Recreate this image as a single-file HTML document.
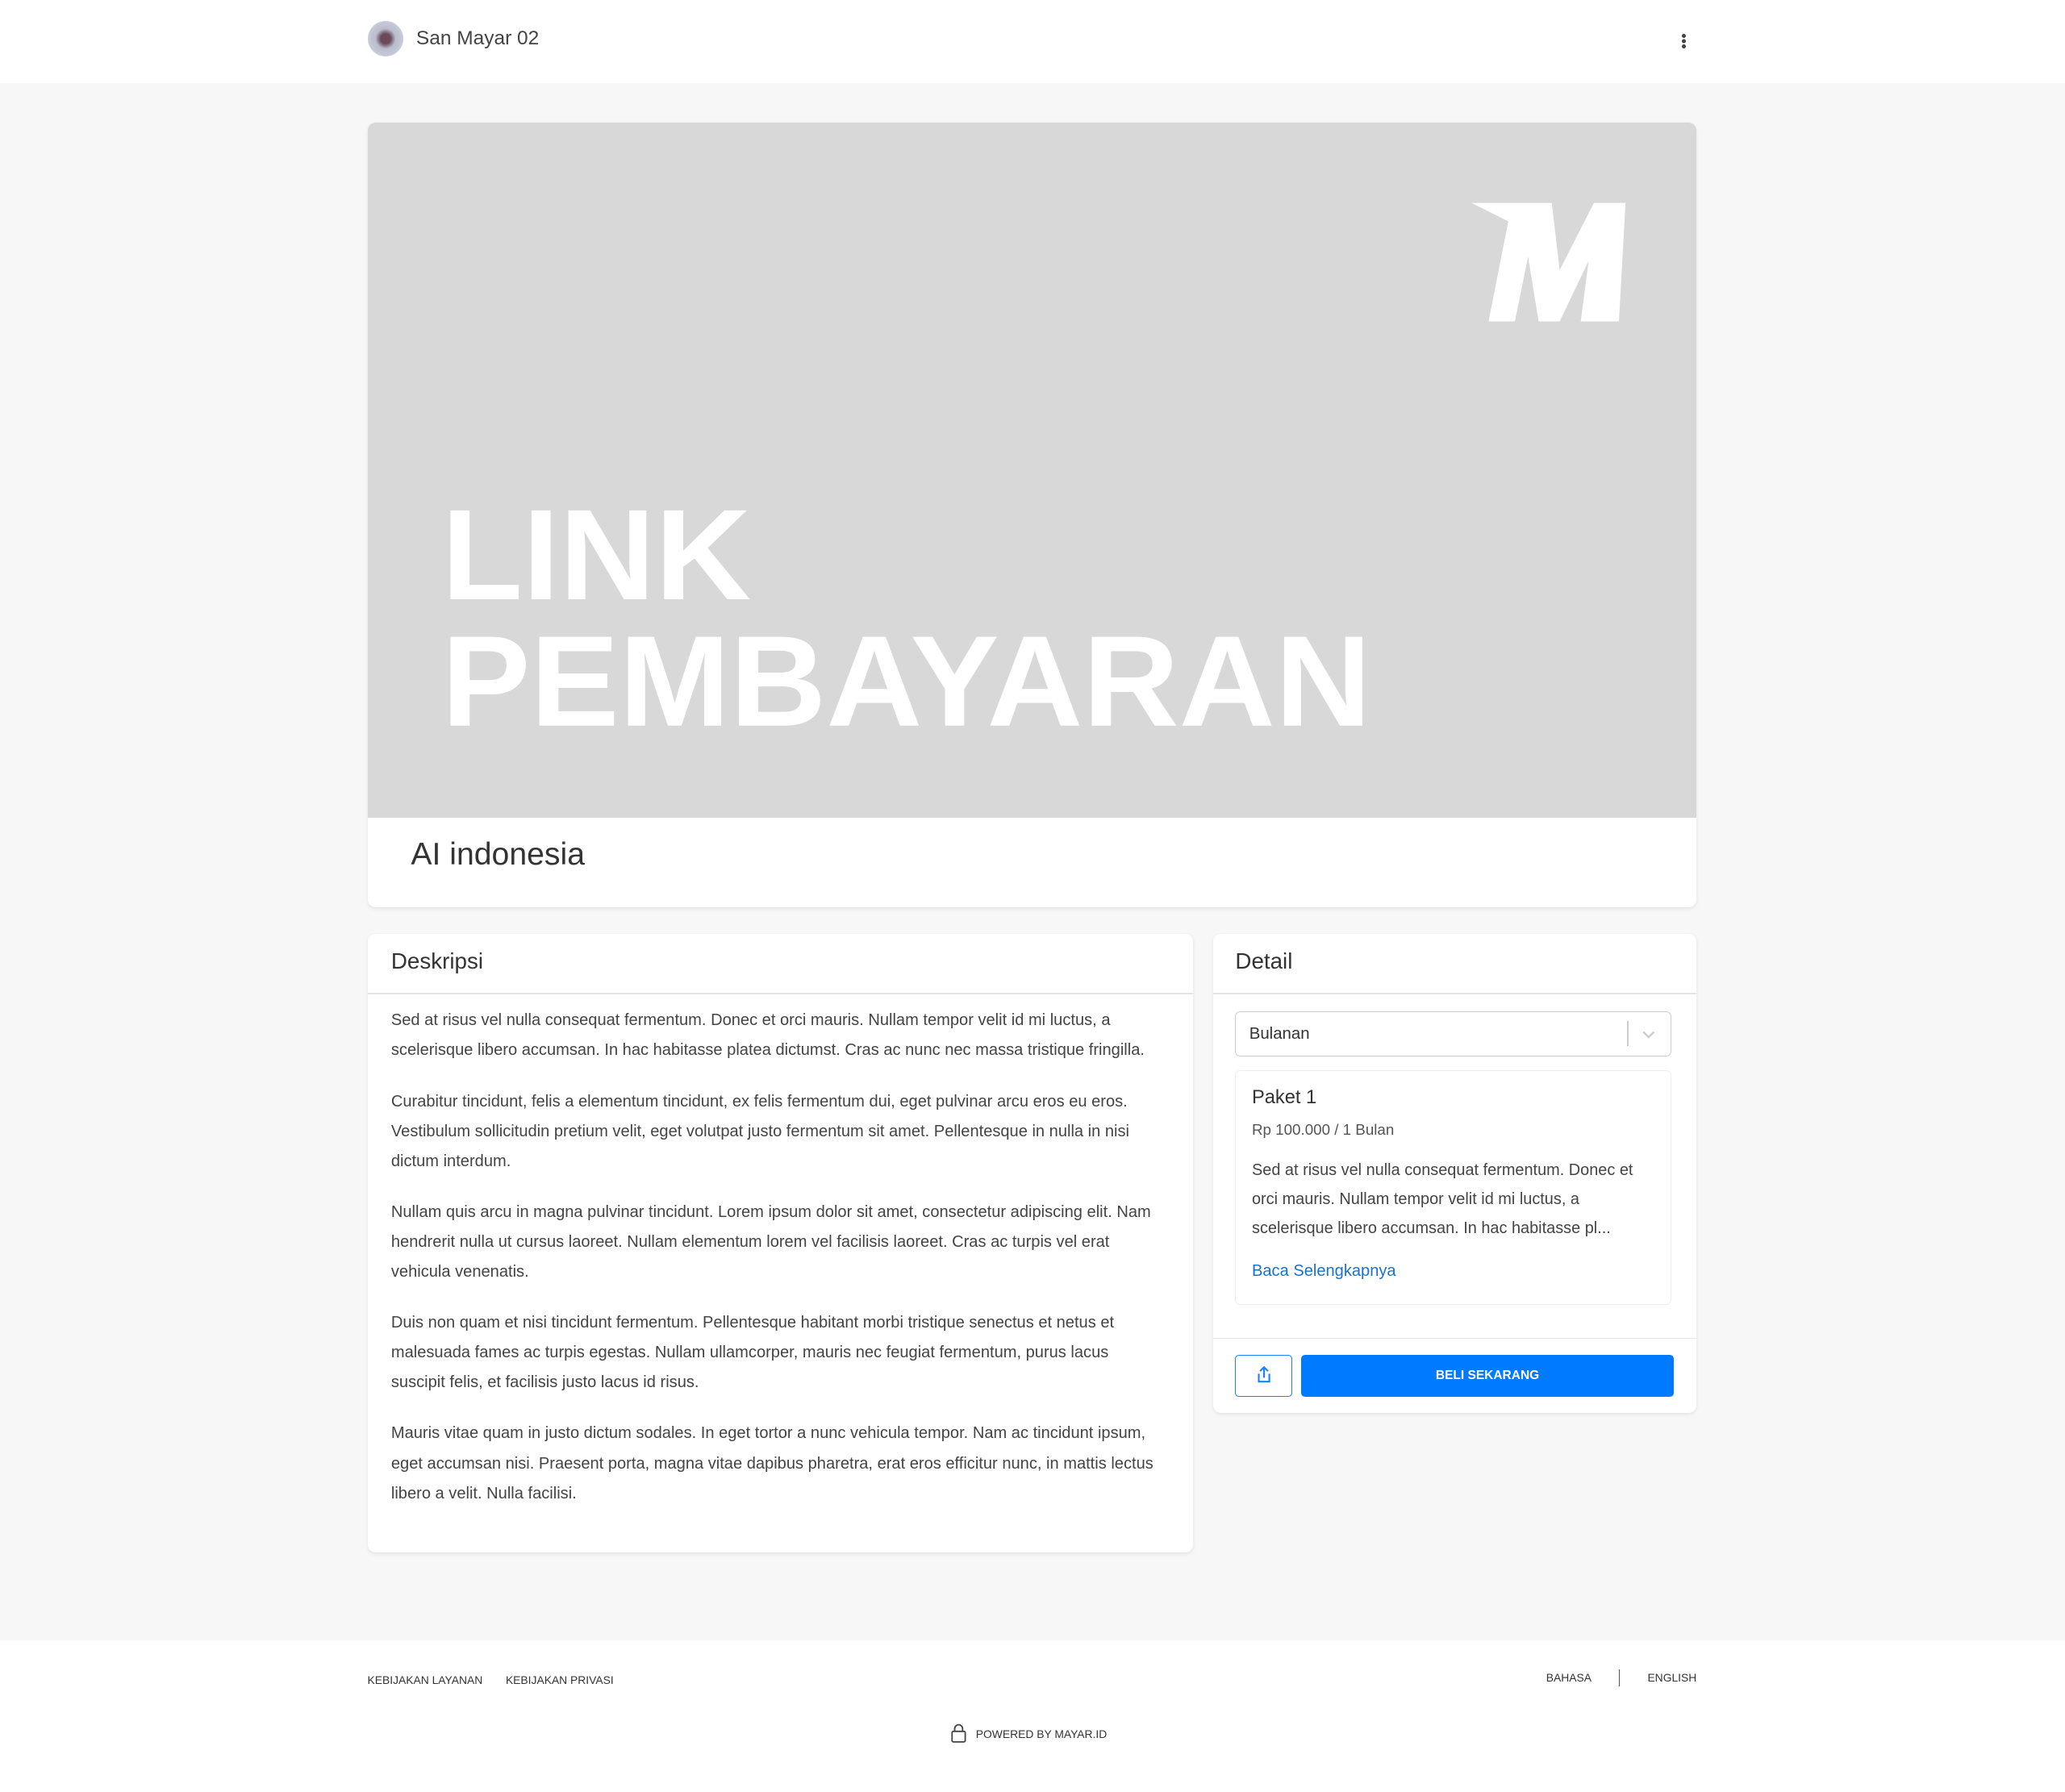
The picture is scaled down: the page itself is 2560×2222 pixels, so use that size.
<!DOCTYPE html>
<html><head><meta charset="utf-8"><style>
html,body{margin:0;padding:0;background:#f7f7f7;}
body{width:2560px;height:2222px;overflow:hidden;font-family:"Liberation Sans",sans-serif;color:#444;}
#w{zoom:1.63265;width:1568px;height:1361px;position:relative;}
.a{position:absolute;}
.card{position:absolute;background:#fff;border-radius:6px;box-shadow:0 1px 3px rgba(0,0,0,.08);}
p{margin:0 0 16px 0;}
</style></head><body><div id="w">
<div class="a" style="left:0;top:0;width:1568px;height:63px;background:#fff;"></div>
<div class="a" style="left:279px;top:16px;width:27px;height:27px;border-radius:50%;background:radial-gradient(circle,#6a4a5a 0 20%,#b8bccc 40%,#d8dae4 100%);"></div>
<div class="a" style="left:316px;top:21px;font-size:15px;color:#444;">San Mayar 02</div>
<div class="a" style="left:1277px;top:26px;width:3px;height:3px;background:#444;border-radius:50%;box-shadow:0 4px 0 #444,0 8px 0 #444;"></div>

<div class="card" style="left:279px;top:93px;width:1009px;height:596px;overflow:hidden;">
<svg width="1009" height="528" style="display:block"><rect width="1009" height="528" fill="#d8d8d8"/>
<g transform="translate(-279,-93)" fill="#fff">
<polygon points="1117,154 1178,154 1184,205 1210,154 1234,154 1229,244 1200,244 1206,198 1184,244 1168,244 1160,195 1150,244 1130,244 1145,168"/>
<text x="335" y="455" font-family="Liberation Sans" font-weight="bold" font-size="98" textLength="235" lengthAdjust="spacingAndGlyphs">LINK</text>
<text x="335" y="551" font-family="Liberation Sans" font-weight="bold" font-size="98" textLength="706" lengthAdjust="spacingAndGlyphs">PEMBAYARAN</text>
</g></svg>
<div class="a" style="left:33px;top:543px;font-size:24px;color:#333;">AI indonesia</div>
</div>

<div class="card" style="left:279px;top:709px;width:627px;height:470px;">
<div class="a" style="left:18px;top:11px;font-size:17px;color:#333;">Deskripsi</div>
<div class="a" style="left:0;top:45px;width:627px;height:1px;background:#e6e6e6;"></div>
<div class="a" style="left:18px;top:55px;width:585px;font-size:12.3px;line-height:22.7px;color:#444;">
<p>Sed at risus vel nulla consequat fermentum. Donec et orci mauris. Nullam tempor velit id mi luctus, a scelerisque libero accumsan. In hac habitasse platea dictumst. Cras ac nunc nec massa tristique fringilla.</p>
<p>Curabitur tincidunt, felis a elementum tincidunt, ex felis fermentum dui, eget pulvinar arcu eros eu eros. Vestibulum sollicitudin pretium velit, eget volutpat justo fermentum sit amet. Pellentesque in nulla in nisi dictum interdum.</p>
<p>Nullam quis arcu in magna pulvinar tincidunt. Lorem ipsum dolor sit amet, consectetur adipiscing elit. Nam hendrerit nulla ut cursus laoreet. Nullam elementum lorem vel facilisis laoreet. Cras ac turpis vel erat vehicula venenatis.</p>
<p>Duis non quam et nisi tincidunt fermentum. Pellentesque habitant morbi tristique senectus et netus et malesuada fames ac turpis egestas. Nullam ullamcorper, mauris nec feugiat fermentum, purus lacus suscipit felis, et facilisis justo lacus id risus.</p>
<p>Mauris vitae quam in justo dictum sodales. In eget tortor a nunc vehicula tempor. Nam ac tincidunt ipsum, eget accumsan nisi. Praesent porta, magna vitae dapibus pharetra, erat eros efficitur nunc, in mattis lectus libero a velit. Nulla facilisi.</p>
</div></div>

<div class="card" style="left:921px;top:709px;width:367px;height:364px;">
<div class="a" style="left:17px;top:11px;font-size:17px;color:#333;">Detail</div>
<div class="a" style="left:0;top:45px;width:367px;height:1px;background:#e6e6e6;"></div>
<div class="a" style="left:17px;top:59px;width:330px;height:33px;border:1px solid #ccc;border-radius:4px;">
<div class="a" style="left:10px;top:10px;font-size:12.5px;color:#333;">Bulanan</div>
<div class="a" style="left:297px;top:7px;width:1px;height:19px;background:#ccc;"></div>
<svg class="a" style="left:307px;top:11px" width="12" height="12"><path d="M2 4l4 4 4-4" fill="none" stroke="#ccc" stroke-width="1.5"/></svg>
</div>
<div class="a" style="left:17px;top:104px;width:330px;height:177px;border:1px solid #eee;border-radius:4px;">
<div class="a" style="left:12px;top:12px;font-size:14.5px;color:#333;">Paket 1</div>
<div class="a" style="left:12px;top:38px;font-size:11.5px;color:#555;">Rp 100.000 / 1 Bulan</div>
<div class="a" style="left:12px;top:65px;width:310px;font-size:12.2px;line-height:22px;color:#444;">Sed at risus vel nulla consequat fermentum. Donec et orci mauris. Nullam tempor velit id mi luctus, a scelerisque libero accumsan. In hac habitasse pl...</div>
<div class="a" style="left:12px;top:145px;font-size:12.3px;color:#1a73c8;">Baca Selengkapnya</div>
</div>
<div class="a" style="left:0;top:307px;width:367px;height:1px;background:#e6e6e6;"></div>
<div class="a" style="left:17px;top:320px;width:43px;height:32px;border:1px solid #1a82ff;border-radius:3px;box-sizing:border-box;">
<svg class="a" style="left:13px;top:7px" width="16" height="16"><path d="M4 7v6h8V7M8 10V2M5 5l3-3 3 3" fill="none" stroke="#1a82ff" stroke-width="1.3"/></svg></div>
<div class="a" style="left:67px;top:320px;width:283px;height:32px;background:#007bff;border-radius:3px;color:#fff;font-size:9.5px;font-weight:bold;text-align:center;line-height:32px;">BELI SEKARANG</div>
</div>

<div class="a" style="left:0;top:1246px;width:1568px;height:115px;background:#fff;">
<div class="a" style="left:279px;top:25px;font-size:8.5px;color:#333;">KEBIJAKAN LAYANAN</div>
<div class="a" style="left:384px;top:25px;font-size:8.5px;color:#333;">KEBIJAKAN PRIVASI</div>
<div class="a" style="left:1174px;top:23px;font-size:8.5px;color:#333;">BAHASA</div>
<div class="a" style="left:1229px;top:22px;width:1px;height:13px;background:#555;"></div>
<div class="a" style="left:1251px;top:23px;font-size:8.5px;color:#333;">ENGLISH</div>
<svg class="a" style="left:721px;top:63px" width="14" height="15"><rect x="2" y="6" width="10" height="8" rx="1" fill="none" stroke="#444" stroke-width="1.1"/><path d="M4 6V4a3 3 0 016 0v2" fill="none" stroke="#444" stroke-width="1.1"/></svg>
<div class="a" style="left:741px;top:66px;font-size:8.5px;color:#333;">POWERED BY MAYAR.ID</div>
</div>
</div></body></html>
